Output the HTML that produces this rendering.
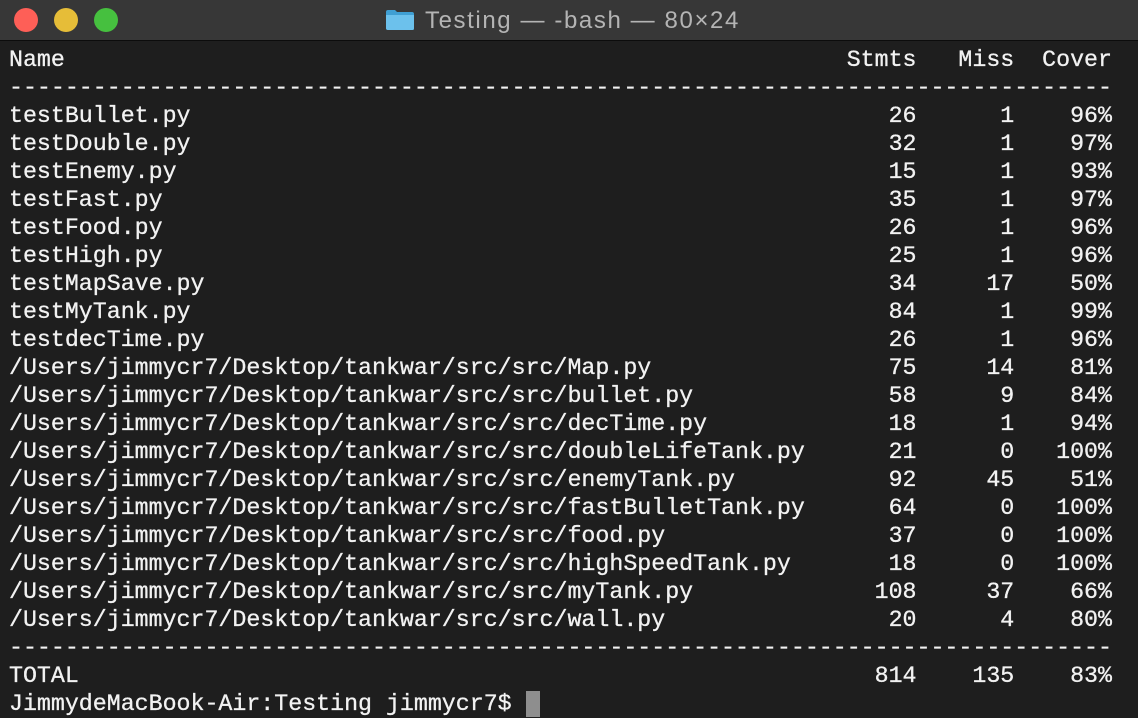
<!DOCTYPE html>
<html><head><meta charset="utf-8"><style>
html,body{margin:0;padding:0;background:#1e1e1e;width:1138px;height:700px;overflow:hidden}
.bar{position:absolute;left:0;top:0;width:1138px;height:40px;background:#373737;border-bottom:1px solid #0c0c0c}
.dot{position:absolute;top:8px;width:24px;height:24px;border-radius:50%}
.title{position:absolute;left:425px;top:7px;font:24px "Liberation Sans",sans-serif;letter-spacing:1.6px;color:#b4b4b4;white-space:nowrap}
.folder{position:absolute;left:385px;top:9px;width:30px;height:22px}
.term{position:absolute;left:9px;top:46px;font:23.27px/28px "Liberation Mono",monospace;color:#f2f2f2;white-space:pre;margin:0;-webkit-text-stroke:0.3px #f2f2f2}
.cur{display:inline-block;width:14px;height:26px;background:#8e8e8e;vertical-align:top;margin-top:1px;-webkit-text-stroke:0}
</style></head><body>
<div class="bar">
<div class="dot" style="left:14px;background:#fe5f57"></div>
<div class="dot" style="left:54px;background:#e6bd38"></div>
<div class="dot" style="left:94px;background:#46c03f"></div>
<svg class="folder" viewBox="0 0 30 22"><path d="M1 3 Q1 1 3 1 H10 L12 3 H27 Q29 3 29 5 V20 Q29 21 27 21 H3 Q1 21 1 19 Z" fill="#3f9fd3"/><path d="M1 6 H29 V19 Q29 21 27 21 H3 Q1 21 1 19 Z" fill="#6cc1ec"/></svg>
<div class="title">Testing — -bash — 80×24</div>
</div>
<pre class="term">Name                                                        Stmts   Miss  Cover
-------------------------------------------------------------------------------
testBullet.py                                                  26      1    96%
testDouble.py                                                  32      1    97%
testEnemy.py                                                   15      1    93%
testFast.py                                                    35      1    97%
testFood.py                                                    26      1    96%
testHigh.py                                                    25      1    96%
testMapSave.py                                                 34     17    50%
testMyTank.py                                                  84      1    99%
testdecTime.py                                                 26      1    96%
/Users/jimmycr7/Desktop/tankwar/src/src/Map.py                 75     14    81%
/Users/jimmycr7/Desktop/tankwar/src/src/bullet.py              58      9    84%
/Users/jimmycr7/Desktop/tankwar/src/src/decTime.py             18      1    94%
/Users/jimmycr7/Desktop/tankwar/src/src/doubleLifeTank.py      21      0   100%
/Users/jimmycr7/Desktop/tankwar/src/src/enemyTank.py           92     45    51%
/Users/jimmycr7/Desktop/tankwar/src/src/fastBulletTank.py      64      0   100%
/Users/jimmycr7/Desktop/tankwar/src/src/food.py                37      0   100%
/Users/jimmycr7/Desktop/tankwar/src/src/highSpeedTank.py       18      0   100%
/Users/jimmycr7/Desktop/tankwar/src/src/myTank.py             108     37    66%
/Users/jimmycr7/Desktop/tankwar/src/src/wall.py                20      4    80%
-------------------------------------------------------------------------------
TOTAL                                                         814    135    83%
JimmydeMacBook-Air:Testing jimmycr7$ <span class="cur"></span></pre>
</body></html>
